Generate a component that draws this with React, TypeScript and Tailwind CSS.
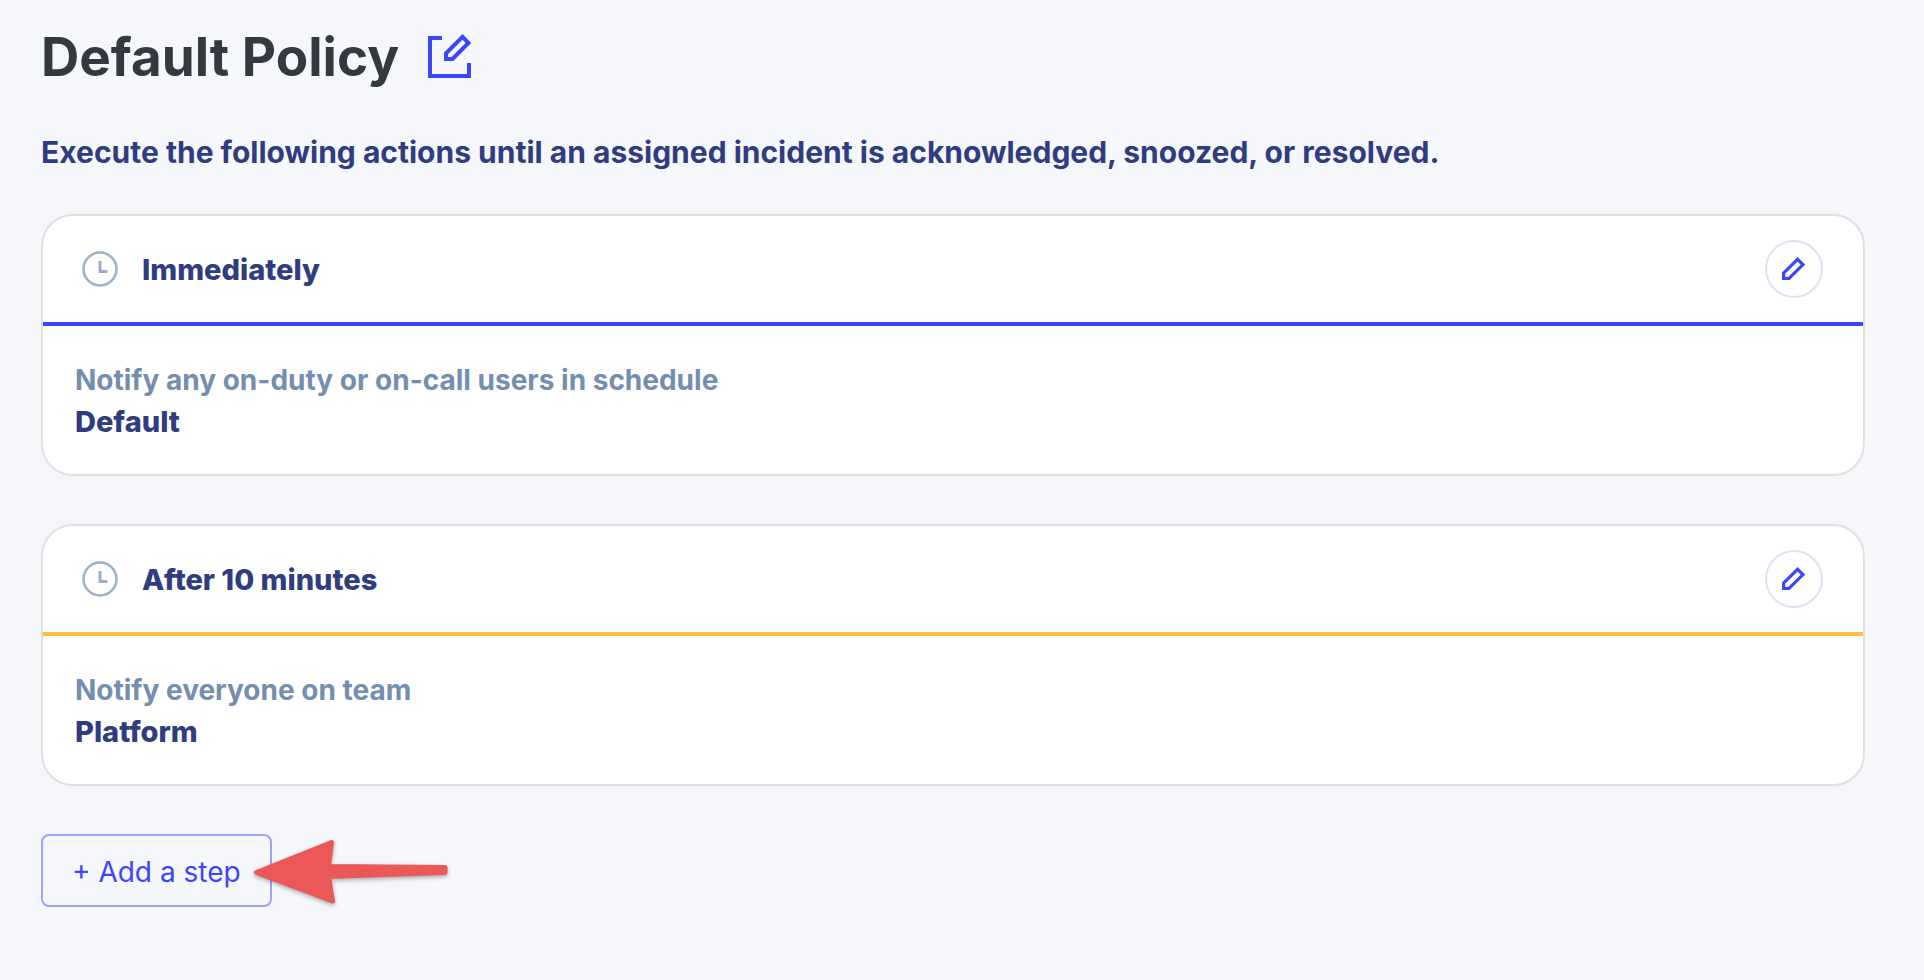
import { useState } from "react";

const STEPS = [
  {
    title: "Immediately",
    action: "Notify any on-duty or on-call users in schedule",
    target: "Default",
    line: "border-[#3d46f5]",
  },
  {
    title: "After 10 minutes",
    action: "Notify everyone on team",
    target: "Platform",
    line: "border-[#fdc13c]",
  },
];

export function App() {
  const [steps] = useState(STEPS);

  return (
    <main className="min-h-screen bg-[#f5f7fb] pt-6 pr-[59px] pb-16 pl-[41px] font-['Inter',sans-serif]">
      <div className="flex items-center gap-7">
        <h1 className="pt-0.5 text-[53px] leading-[62px] font-bold text-[#323940]">
          Default Policy
        </h1>
        <button type="button" aria-label="Edit policy name">
          <EditIcon />
        </button>
      </div>

      <p className="mt-10 text-[30px] leading-[48px] font-bold text-[#2f3c7f]">
        Execute the following actions until an assigned incident is
        acknowledged, snoozed, or resolved.
      </p>

      <div className="mt-[38px] flex flex-col gap-12">
        {steps.map((step) => (
          <StepCard key={step.title} {...step} />
        ))}
      </div>

      <div className="relative mt-12 w-fit">
        <button
          type="button"
          className="rounded-lg border-2 border-[#9da2fa] px-[29px] pt-4 pb-3 text-[28px] leading-[41px] text-[#3d46f5]"
        >
          + Add a step
        </button>
        <Arrow />
      </div>
    </main>
  );
}

function StepCard(props: (typeof STEPS)[number]) {
  return (
    <section className="rounded-[32px] border-2 border-[#e0e0e0] bg-white leading-[42px]">
      <div
        className={`flex items-center border-b-4 py-6 pr-10 pl-[39px] ${props.line}`}
      >
        <ClockIcon />
        <h2 className="ml-6 pt-0.5 text-[29px] font-extrabold text-[#2f3c7f]">
          {props.title}
        </h2>
        <button
          type="button"
          aria-label={`Edit step ${props.title}`}
          className="ml-auto flex size-[58px] items-center justify-center rounded-full border-2 border-[#dbe4f2]"
        >
          <PencilIcon />
        </button>
      </div>
      <div className="px-8 pt-[33px] pb-[31px]">
        <p className="text-[28px] font-bold text-[#738eae]">{props.action}</p>
        <p className="text-[29px] font-extrabold text-[#2f3c7f]">
          {props.target}
        </p>
      </div>
    </section>
  );
}

function ClockIcon() {
  return (
    <svg className="size-9" viewBox="0 0 36 36" fill="none" stroke="#9bb0ca">
      <circle cx="18" cy="18" r="16.5" strokeWidth="2.5" />
      <path d="M18 10v10.5h7.5" strokeWidth="3" />
    </svg>
  );
}

function EditIcon() {
  return (
    <svg
      className="size-11"
      viewBox="0 0 44 44"
      fill="none"
      stroke="#3d46f5"
      strokeWidth="4"
    >
      <path d="M15 4H3v38h39V29" />
      <path d="M35.500 2.800L19 19.300V25H25.500L41.500 9Z" />
    </svg>
  );
}

function PencilIcon() {
  return (
    <svg
      className="size-6"
      viewBox="0 0 24 24"
      fill="none"
      stroke="#3d46f5"
      strokeWidth="3.2"
    >
      <path d="M15.500 2.300L1.600 16.200V21.500H7L21 7.600Z" />
    </svg>
  );
}

function Arrow() {
  return (
    <svg
      className="pointer-events-none absolute top-0 left-52 h-20 w-[204px] drop-shadow-[0_2px_2px_rgba(0,0,0,0.3)]"
      viewBox="0 0 204 80"
      fill="#ea5858"
      stroke="#ea5858"
      strokeWidth="5"
      strokeLinejoin="round"
    >
      <path d="M7.500 38.500L82.500 8.500L79.500 32.500L196 33.500V38.500L79.500 42.500L83.500 67Z" />
    </svg>
  );
}

export default App;
